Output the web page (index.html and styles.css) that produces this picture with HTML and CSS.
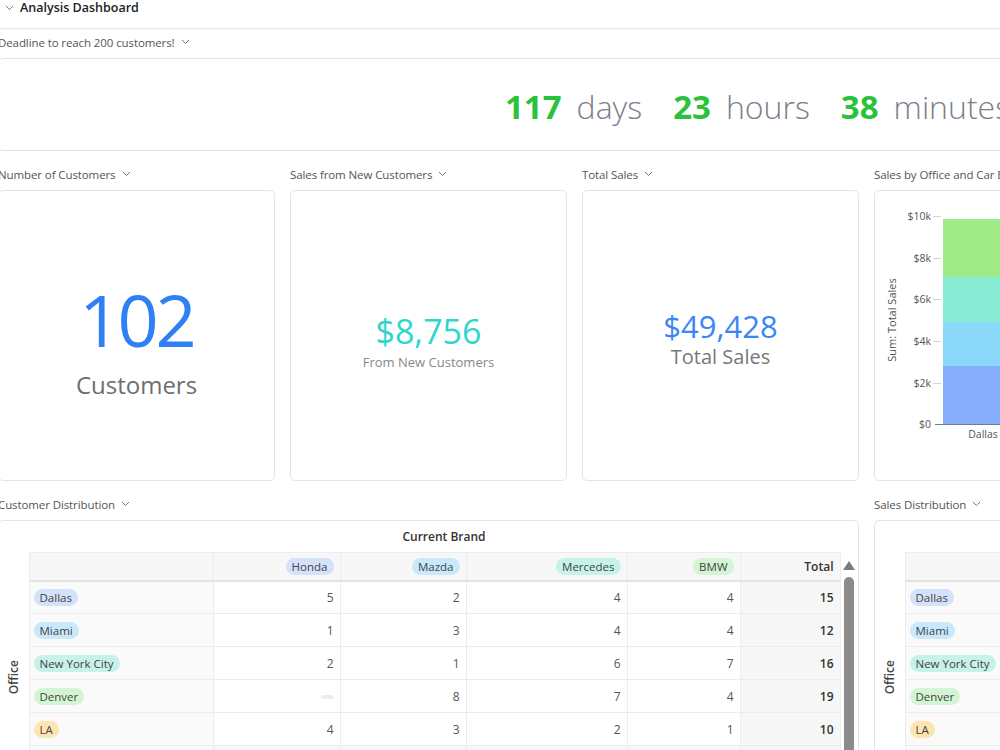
FILE: index.html
```html
<!DOCTYPE html>
<html lang="en">
<head>
    <meta charset="UTF-8">
    <meta name="viewport" content="width=device-width, initial-scale=1.0">
    <title>Analysis Dashboard</title>
    <link rel="stylesheet" href="styles.css">
</head>
<body>
<div class="board">
    <div class="board-head">
        <svg class="chev" width="9" height="6" viewBox="0 0 9 6"><polyline points="1,1 4.5,4.5 8,1"/></svg>
        <span>Analysis Dashboard</span>
    </div>

    <div class="grid">
        <!-- countdown -->
        <section class="widget full">
            <div class="widget-label">Deadline to reach 200 customers! <svg class="chev" width="9" height="6" viewBox="0 0 9 6"><polyline points="1,1 4.5,4.5 8,1"/></svg></div>
            <div class="card countdown">
                <span class="num">117</span><span class="unit">days</span>
                <span class="num">23</span><span class="unit">hours</span>
                <span class="num">38</span><span class="unit">minutes</span>
            </div>
        </section>

        <section class="widget">
            <div class="widget-label">Number of Customers <svg class="chev" width="9" height="6" viewBox="0 0 9 6"><polyline points="1,1 4.5,4.5 8,1"/></svg></div>
            <div class="card stat">
                <div class="stat-big">102</div>
                <div class="stat-name">Customers</div>
            </div>
        </section>

        <section class="widget">
            <div class="widget-label">Sales from New Customers <svg class="chev" width="9" height="6" viewBox="0 0 9 6"><polyline points="1,1 4.5,4.5 8,1"/></svg></div>
            <div class="card stat">
                <div class="stat-teal">$8,756</div>
                <div class="stat-small">From New Customers</div>
            </div>
        </section>

        <section class="widget">
            <div class="widget-label">Total Sales <svg class="chev" width="9" height="6" viewBox="0 0 9 6"><polyline points="1,1 4.5,4.5 8,1"/></svg></div>
            <div class="card stat stat-up">
                <div class="stat-blue">$49,428</div>
                <div class="stat-mid">Total Sales</div>
            </div>
        </section>

        <section class="widget">
            <div class="widget-label">Sales by Office and Car Brand <svg class="chev" width="9" height="6" viewBox="0 0 9 6"><polyline points="1,1 4.5,4.5 8,1"/></svg></div>
            <div class="card">
                <svg class="chart" width="275" height="289" viewBox="0 0 275 289">
                    <text class="axis-title" transform="translate(21,129) rotate(-90)" text-anchor="middle">Sum: Total Sales</text>
                    <g class="ticks">
                        <text x="56" y="29" text-anchor="end">$10k</text>
                        <text x="56" y="71" text-anchor="end">$8k</text>
                        <text x="56" y="112" text-anchor="end">$6k</text>
                        <text x="56" y="154" text-anchor="end">$4k</text>
                        <text x="56" y="196" text-anchor="end">$2k</text>
                        <text x="56" y="237" text-anchor="end">$0</text>
                        <line x1="58" y1="25.5" x2="66" y2="25.5"/>
                        <line x1="58" y1="67.5" x2="66" y2="67.5"/>
                        <line x1="58" y1="108.5" x2="66" y2="108.5"/>
                        <line x1="58" y1="150.5" x2="66" y2="150.5"/>
                        <line x1="58" y1="192.5" x2="66" y2="192.5"/>
                    </g>
                    <rect x="68" y="175" width="80" height="58" fill="#88affb"/>
                    <rect x="68" y="131" width="80" height="44" fill="#8cd8f8"/>
                    <rect x="68" y="86" width="80" height="45" fill="#88ebd3"/>
                    <rect x="68" y="28" width="80" height="58" fill="#a0eb87"/>
                    <line class="base" x1="60" y1="233.5" x2="275" y2="233.5"/>
                    <text class="tick-x" x="108" y="247" text-anchor="middle">Dallas</text>
                </svg>
            </div>
        </section>

        <section class="widget span3">
            <div class="widget-label">Customer Distribution <svg class="chev" width="9" height="6" viewBox="0 0 9 6"><polyline points="1,1 4.5,4.5 8,1"/></svg></div>
            <div class="card pivot">
                <div class="pivot-title">Current Brand</div>
                <div class="pivot-body">
                    <table class="pt">
                        <colgroup>
                            <col class="c-axis"><col class="c-label"><col class="c-honda"><col class="c-mazda"><col class="c-merc"><col class="c-bmw"><col class="c-total">
                        </colgroup>
                        <thead>
                            <tr>
                                <th class="axis"></th>
                                <th></th>
                                <th><span class="pill p-blue">Honda</span></th>
                                <th><span class="pill p-sky">Mazda</span></th>
                                <th><span class="pill p-mint">Mercedes</span></th>
                                <th><span class="pill p-green">BMW</span></th>
                                <th class="total">Total</th>
                            </tr>
                        </thead>
                        <tbody>
                            <tr>
                                <th class="axis" rowspan="6"><span>Office</span></th>
                                <td class="label"><span class="pill p-blue">Dallas</span></td>
                                <td>5</td><td>2</td><td>4</td><td>4</td><td class="total">15</td>
                            </tr>
                            <tr>
                                <td class="label"><span class="pill p-sky">Miami</span></td>
                                <td>1</td><td>3</td><td>4</td><td>4</td><td class="total">12</td>
                            </tr>
                            <tr>
                                <td class="label"><span class="pill p-mint">New York City</span></td>
                                <td>2</td><td>1</td><td>6</td><td>7</td><td class="total">16</td>
                            </tr>
                            <tr>
                                <td class="label"><span class="pill p-green">Denver</span></td>
                                <td><span class="empty"></span></td><td>8</td><td>7</td><td>4</td><td class="total">19</td>
                            </tr>
                            <tr>
                                <td class="label"><span class="pill p-yellow">LA</span></td>
                                <td>4</td><td>3</td><td>2</td><td>1</td><td class="total">10</td>
                            </tr>
                            <tr>
                                <td class="label total">Total</td>
                                <td class="total">12</td><td class="total">17</td><td class="total">23</td><td class="total">20</td><td class="total">72</td>
                            </tr>
                        </tbody>
                    </table>
                    <div class="scroll">
                        <div class="scroll-up"></div>
                        <div class="scroll-thumb"></div>
                    </div>
                </div>
            </div>
        </section>

        <section class="widget">
            <div class="widget-label">Sales Distribution <svg class="chev" width="9" height="6" viewBox="0 0 9 6"><polyline points="1,1 4.5,4.5 8,1"/></svg></div>
            <div class="card pivot">
                <div class="pivot-title"></div>
                <div class="pivot-body">
                    <table class="pt">
                        <colgroup>
                            <col class="c-axis"><col class="c-label"><col class="c-honda">
                        </colgroup>
                        <thead>
                            <tr><th class="axis"></th><th></th><th></th></tr>
                        </thead>
                        <tbody>
                            <tr>
                                <th class="axis" rowspan="6"><span>Office</span></th>
                                <td class="label"><span class="pill p-blue">Dallas</span></td><td></td>
                            </tr>
                            <tr><td class="label"><span class="pill p-sky">Miami</span></td><td></td></tr>
                            <tr><td class="label"><span class="pill p-mint">New York City</span></td><td></td></tr>
                            <tr><td class="label"><span class="pill p-green">Denver</span></td><td></td></tr>
                            <tr><td class="label"><span class="pill p-yellow">LA</span></td><td></td></tr>
                            <tr><td class="label total">Total</td><td></td></tr>
                        </tbody>
                    </table>
                </div>
            </div>
        </section>
    </div>
</div>
</body>
</html>
```

FILE: styles.css
```css
* { box-sizing: border-box; }
body { margin: 0; background: #fff; color: #333; font-family: "Open Sans", "Noto Sans", sans-serif; overflow: hidden; }

.board { margin-left: -2px; width: 1151px; }
.board-head { height: 29px; border-bottom: 1px solid #e6e6e6; display: flex; align-items: flex-start; gap: 6px; padding-left: 7px; font-size: 12.5px; font-weight: 600; color: #222; line-height: 15px; }
.board-head .chev { margin-top: 5px; }

.chev { fill: none; stroke: #777; stroke-width: 1; }

.grid { display: grid; grid-template-columns: repeat(4, 277px); column-gap: 15px; row-gap: 13px; padding-top: 3px; }
.widget.full { grid-column: 1 / -1; }
.widget.span3 { grid-column: span 3; }
.widget-label { height: 20px; margin-bottom: 6px; display: flex; align-items: center; gap: 6px; font-size: 11.5px; letter-spacing: -0.1px; color: #555; white-space: nowrap; }

.card { border: 1px solid #e4e4e4; border-radius: 5px; background: #fff; height: 291px; overflow: hidden; }

.countdown { height: 93px; display: flex; align-items: center; padding: 3px 0 0 506px; white-space: nowrap; }
.countdown .num { font-size: 33px; font-weight: 700; color: #2bc23b; }
.countdown .unit { font-size: 32px; font-weight: 300; color: #7b8089; margin-left: 15px; margin-right: 31px; }

.stat { display: flex; flex-direction: column; align-items: center; justify-content: center; text-align: center; padding-top: 10px; }
.stat.stat-up { padding-top: 4px; }
.stat-big { font-size: 72px; line-height: 80px; color: #2f7ff5; letter-spacing: -3px; }
.stat-name { font-size: 24px; color: #6e6e6e; line-height: 34px; margin-top: 9px; }
.stat-teal { font-size: 34px; line-height: 40px; color: #2ed6cc; }
.stat-small { font-size: 13px; color: #888; line-height: 18px; margin-top: 2px; }
.stat-blue { font-size: 31px; line-height: 38px; color: #3b86f5; }
.stat-mid { font-size: 20px; color: #777; line-height: 24px; }

.chart { display: block; }
.chart text { font-family: "Open Sans", sans-serif; font-size: 10.5px; fill: #555; }
.chart .axis-title { font-size: 11px; }
.chart .ticks line { stroke: #d5d5d5; }
.chart .base { stroke: #6f7d99; }

.pivot { height: 270px; }
.pivot-title { height: 31px; padding-left: 31px; text-align: center; font-size: 12px; font-weight: 600; color: #333; line-height: 32px; }
.pivot-body { display: flex; align-items: flex-start; }

.pt { border-collapse: collapse; table-layout: fixed; font-size: 12px; color: #555; flex: none; }
.c-axis { width: 30px; }
.c-label { width: 184px; }
.c-honda { width: 127px; }
.c-mazda { width: 126px; }
.c-merc { width: 161px; }
.c-bmw { width: 113px; }
.c-total { width: 100px; }

.pt th, .pt td { border: 1px solid #ececec; padding: 0 6px; text-align: right; white-space: nowrap; }
.pt thead th { height: 28px; background: #f7f7f7; border-bottom: 2px solid #e3e3e3; font-weight: 400; }
.pt td { height: 33px; }
.pt td.label { background: #fafafa; text-align: left; padding-left: 4px; }
.pt .total { background: #f7f7f7; font-weight: 600; color: #333; }
.pt td.label.total { padding-left: 8px; }
.pt th.axis { border: none; background: none; padding: 0; text-align: center; }
.pt tbody th.axis span { display: inline-block; writing-mode: vertical-rl; transform: rotate(180deg); font-size: 12px; font-weight: 600; color: #444; }

.pill { display: inline-block; padding: 0 6px; border-radius: 9px; line-height: 17px; font-size: 11.5px; color: #444; font-weight: 400; }
.p-blue { background: #d4e1fb; }
.p-sky { background: #c8e9fb; }
.p-mint { background: #c6f2ea; }
.p-green { background: #d3f5d3; }
.p-yellow { background: #fde5b1; }

.empty { display: inline-block; width: 13px; height: 4px; border-radius: 2px; background: #ececec; vertical-align: middle; }

.scroll { width: 17px; display: flex; flex-direction: column; align-items: center; height: 240px; }
.scroll-up { width: 0; height: 0; margin-top: 9px; border-left: 6px solid transparent; border-right: 6px solid transparent; border-bottom: 9px solid #7a7a7a; }
.scroll-thumb { margin-top: 7px; width: 10px; flex: 1; background: #8b8b8b; border-radius: 5px; }
```
